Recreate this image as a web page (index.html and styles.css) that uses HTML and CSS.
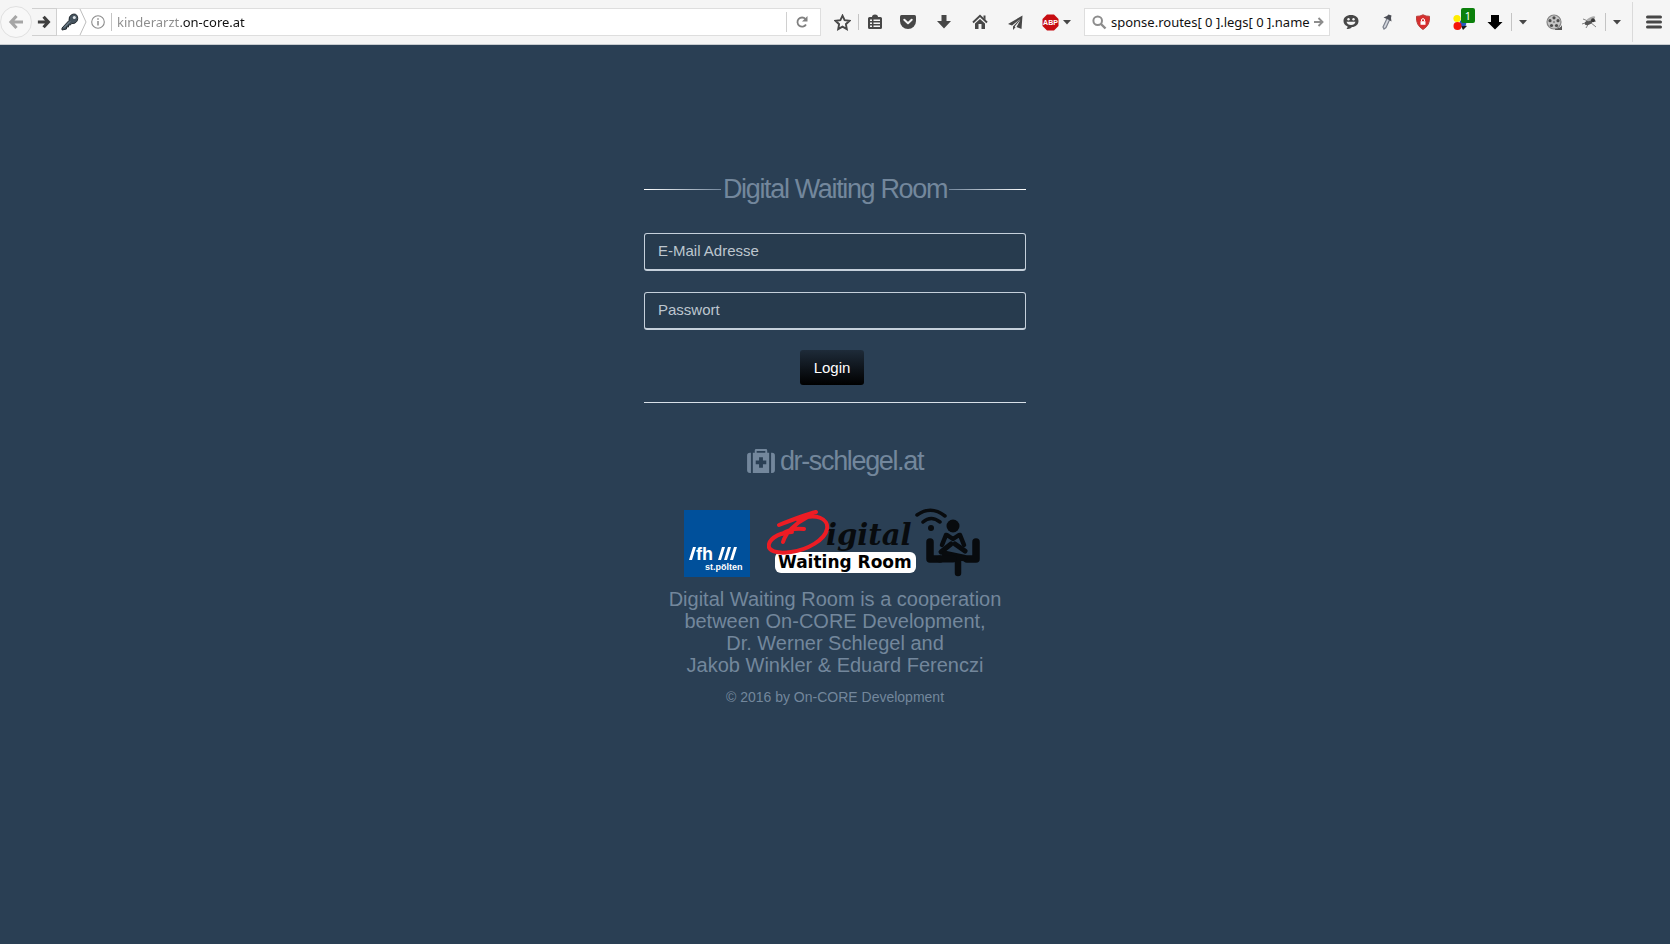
FILE: index.html
```
<!DOCTYPE html>
<html lang="de">
<head>
  <meta charset="UTF-8" />
  <title>Digital Waiting Room</title>
  <link rel="stylesheet" href="styles.css">
</head>
<body>

  <header class="toolbar">
    <div class="history">
      <button type="button" class="back" aria-label="Zurück">
        <svg width="16" height="16" viewBox="0 0 16 16"><path d="M8.500 2 L3 8 L8.500 14 M3.500 8 H15" fill="none" stroke="#a6a6a6" stroke-width="3.200"/></svg>
      </button>
      <button type="button" class="forward" aria-label="Vor">
        <svg width="14" height="14" viewBox="0 0 16 16"><path d="M7.500 2 L13 8 L7.500 14 M12.500 8 H1" fill="none" stroke="#3f3f3f" stroke-width="3.600"/></svg>
      </button>
    </div>

    <div class="urlbar">
      <svg class="key" width="18" height="18" viewBox="0 0 18 18"><path d="M1 15 L8 7.500 Q7.500 3 11 1.500 Q15 0 16.500 3.500 Q17.500 8 14 10 Q12 11 10.500 10.300 L9.500 12 H7.500 V14 H5.500 V16 L1 17 Z" fill="#46545f" stroke="#252c32" stroke-width="1"/><circle cx="13.300" cy="4.500" r="1.500" fill="#dfe4e8"/><path d="M3 14.500 L9 8.500" stroke="#8596a3"/></svg>
      <svg class="chevron" width="8" height="26" viewBox="0 0 8 26"><path d="M1 0 L7 13 L1 26" fill="none" stroke="#bdbdbd"/></svg>
      <svg width="14" height="14" viewBox="0 0 14 14"><circle cx="7" cy="7" r="6.300" fill="none" stroke="#8c8c8c" stroke-width="1.100"/><path d="M7 6 V10.500 M7 3.300 V4.800" stroke="#8c8c8c" stroke-width="1.500"/></svg>
      <span class="divider short"></span>
      <input class="address" type="text" value="kinderarzt.on-core.at" aria-label="Adresse" />
      <button type="button" class="reload" aria-label="Neu laden">
        <svg width="14" height="14" viewBox="0 0 14 14"><path d="M10.500 4 A4.600 4.600 0 1 0 11 9.500" fill="none" stroke="#808080" stroke-width="1.800"/><path d="M12.500 1 V6.500 H7 Z" fill="#808080"/></svg>
      </button>
    </div>

    <button type="button" class="tool star" aria-label="Lesezeichen">
      <svg width="17" height="17" viewBox="0 0 17 17"><path d="M8.500 1.700 L10.600 6.200 L15.500 6.800 L11.900 10.200 L12.800 15.100 L8.500 12.700 L4.200 15.100 L5.100 10.200 L1.500 6.800 L6.400 6.200 Z" fill="none" stroke="#474747" stroke-width="1.900"/></svg>
    </button>
    <span class="divider"></span>
    <button type="button" class="tool list" aria-label="Lesezeichen anzeigen">
      <svg width="16" height="16" viewBox="0 0 16 16"><path d="M5 3 Q5 .5 8 .5 Q11 .5 11 3 H13.500 Q15 3 15 4.500 V13.500 Q15 15 13.500 15 H2.500 Q1 15 1 13.500 V4.500 Q1 3 2.500 3 Z" fill="#474747"/><path d="M3 6.200 H5 M6.500 6.200 H13 M3 9.200 H5 M6.500 9.200 H13 M3 12.200 H5 M6.500 12.200 H13" stroke="#f5f5f5" stroke-width="1.600"/></svg>
    </button>
    <button type="button" class="tool" aria-label="Pocket">
      <svg width="16" height="16" viewBox="0 0 16 16"><path d="M1.500 1 H14.500 Q16 1 16 2.500 V7 A8 8 0 0 1 0 7 V2.500 Q0 1 1.500 1 Z" fill="#474747"/><path d="M4.300 5.700 L8 9.200 L11.700 5.700" fill="none" stroke="#f5f5f5" stroke-width="2" stroke-linecap="round" stroke-linejoin="round"/></svg>
    </button>
    <button type="button" class="tool" aria-label="Downloads">
      <svg width="16" height="16" viewBox="0 0 16 16"><path d="M5.500 1 H10.500 V7 H15 L8 14.500 L1 7 H5.500 Z" fill="#474747"/></svg>
    </button>
    <button type="button" class="tool" aria-label="Startseite">
      <svg width="16" height="16" viewBox="0 0 16 16"><path d="M1 8.500 L8 1.800 L15 8.500" fill="none" stroke="#474747" stroke-width="1.900"/><path d="M11.500 1.500 H13.500 V6 L11.500 4 Z M3 9.500 L8 5 L13 9.500 V15 H9.500 V10 H6.500 V15 H3 Z" fill="#474747"/></svg>
    </button>
    <button type="button" class="tool send" aria-label="Senden">
      <svg width="15" height="15" viewBox="0 0 15 15"><path d="M14.500 .5 L0 9 L4 10.500 L12 4 L5 11.500 V15 L7.500 12.200 L6.700 11.500 L12.500 4.500 L8.500 12 L13.500 14 Z" fill="#474747"/></svg>
    </button>
    <button type="button" class="tool abp" aria-label="Adblock Plus">
      <svg width="17" height="17" viewBox="0 0 17 17"><path d="M5 .5 H12 L16.500 5 V12 L12 16.500 H5 L.5 12 V5 Z" fill="#c70d12"/><text x="8.500" y="11" class="abp-text">ABP</text></svg>
      <svg width="8" height="5" viewBox="0 0 8 5"><path d="M0 0 H8 L4 4.500 Z" fill="#474747"/></svg>
    </button>

    <div class="search">
      <svg width="15" height="15" viewBox="0 0 15 15"><circle cx="5.700" cy="5.700" r="4.300" fill="none" stroke="#8d8d8d" stroke-width="2"/><path d="M9 9 L13.500 13.500" stroke="#8d8d8d" stroke-width="2.400"/></svg>
      <input type="text" value="sponse.routes[ 0 ].legs[ 0 ].name" aria-label="Suchen" />
      <button type="button" aria-label="Suche starten">
        <svg width="10" height="10" viewBox="0 0 10 10"><path d="M0 5 H8 M4.500 1 L8.500 5 L4.500 9" fill="none" stroke="#8d8d8d" stroke-width="1.900"/></svg>
      </button>
    </div>

    <button type="button" class="tool" aria-label="Chat">
      <svg width="16" height="16" viewBox="0 0 16 16"><path d="M8 1 C12.500 1 15.500 3.500 15.500 7 C15.500 10.500 12.500 13 9 13 C7.500 15 5 15 3.500 15 Q4.800 14 4.500 12.300 C2 11.300 .5 9.500 .5 7 C.5 3.500 3.500 1 8 1 Z" fill="#474747"/><circle cx="5.500" cy="5.300" r="1.200" fill="#f5f5f5"/><circle cx="10.500" cy="5.300" r="1.200" fill="#f5f5f5"/><path d="M3.500 7.800 H12.500 Q11.500 11 8 11 Q4.500 11 3.500 7.800 Z" fill="#f5f5f5"/></svg>
    </button>
    <button type="button" class="tool" aria-label="Farbpipette">
      <svg width="16" height="16" viewBox="0 0 16 16"><path d="M8 4.500 L4 13 L5 15 L7 13.500 L10.500 6" fill="#d5d8df" stroke="#7b808c" stroke-width="1.200"/><path d="M4.500 3.500 L8 2 L9.500 .5 L12.500 1.500 L12 4 L12.500 7.500 L9 5.500 Z" fill="#4b4d55"/></svg>
    </button>
    <button type="button" class="tool" aria-label="Schutz">
      <svg width="16" height="16" viewBox="0 0 16 16"><path d="M8 .8 Q11 2.500 14.500 2.300 Q15.500 11 8 15.500 Q.5 11 1.500 2.300 Q5 2.500 8 .8 Z" fill="#d62e2e" stroke="#b9403c"/><path d="M5.500 7.200 H10.500 V10.800 H5.500 Z" fill="#fff"/><path d="M6.500 7 V6 Q6.500 4.700 8 4.700 Q9.500 4.700 9.500 6 V7" fill="none" stroke="#fff" stroke-width="1"/></svg>
    </button>
    <button type="button" class="tool balls" aria-label="Tracker, 1 gefunden">
      <svg width="16" height="16" viewBox="0 0 16 16"><path d="M8 10 L15 12 L11 16 Z" fill="#181818"/><circle cx="11" cy="9" r="3.300" fill="#2858bd"/><circle cx="5" cy="4.500" r="3.600" fill="#ffec00"/><circle cx="5.500" cy="12" r="4" fill="#f41408"/></svg>
      <span class="badge">1</span>
    </button>
    <button type="button" class="tool arrow" aria-label="Herunterladen">
      <svg width="16" height="16" viewBox="0 0 16 16"><path d="M4 1 H12 V8 H15.500 L8 15.500 L.5 8 H4 Z" fill="#000"/></svg>
    </button>
    <span class="divider short"></span>
    <button type="button" class="tool caret" aria-label="Mehr">
      <svg width="8" height="5" viewBox="0 0 8 5"><path d="M0 0 H8 L4 4.500 Z" fill="#474747"/></svg>
    </button>
    <button type="button" class="tool reel" aria-label="Video">
      <svg width="17" height="17" viewBox="0 0 17 17"><path d="M9 14 Q14 15 16 11 V16 H9 Z" fill="#555"/><circle cx="8" cy="8" r="7" fill="#c5c5c5" stroke="#858585" stroke-width="1.200"/><g fill="#4d4d4d"><circle cx="8" cy="3.800" r="1.600"/><circle cx="12" cy="6.700" r="1.600"/><circle cx="10.500" cy="11.500" r="1.600"/><circle cx="5.500" cy="11.500" r="1.600"/><circle cx="4" cy="6.700" r="1.600"/><circle cx="8" cy="8" r=".8"/></g></svg>
    </button>
    <button type="button" class="tool fly" aria-label="Firebug">
      <svg width="16" height="16" viewBox="0 0 16 16"><path d="M2 5 L7 7 M1 10 L7 8 M5 14 L8 9 M15 13 L9 8 M15 7 L9 8" stroke="#666" stroke-width=".8"/><ellipse cx="7.500" cy="8.500" rx="4" ry="2.300" transform="rotate(-25 7.500 8.500)" fill="#555"/><ellipse cx="10" cy="4.700" rx="4.500" ry="1.600" transform="rotate(-25 10 4.700)" fill="#aaa"/><circle cx="12" cy="6.300" r="2" fill="#383838"/></svg>
    </button>
    <span class="divider short"></span>
    <button type="button" class="tool caret" aria-label="Mehr">
      <svg width="8" height="5" viewBox="0 0 8 5"><path d="M0 0 H8 L4 4.500 Z" fill="#474747"/></svg>
    </button>
    <span class="divider tall"></span>
    <button type="button" class="tool menu" aria-label="Menü">
      <svg width="16" height="14" viewBox="0 0 16 14"><path d="M1.500 2 H14.500 M1.500 7 H14.500 M1.500 12 H14.500" stroke="#474747" stroke-width="3" stroke-linecap="round"/></svg>
    </button>
  </header>

  <main class="login">
    <form>
      <h1 class="title">Digital Waiting Room</h1>
      <input type="email" placeholder="E-Mail Adresse" aria-label="E-Mail Adresse" />
      <input type="password" placeholder="Passwort" aria-label="Passwort" />
      <button type="submit">Login</button>
    </form>

    <section class="info">
      <h1>
        <svg width="28" height="24" viewBox="0 0 29 25"><path d="M3 4 H4 V25 H3 Q0 25 0 22 V7 Q0 4 3 4 Z M25 4 H26 Q29 4 29 7 V22 Q29 25 26 25 H25 Z" fill="#73879c"/><path fill-rule="evenodd" d="M6 4 H8 V1.500 Q8 0 9.500 0 H19.500 Q21 0 21 1.500 V4 H23 V25 H6 Z M10 2 V4 H19 V2 Z M12.500 8.500 V12 H9 V16 H12.500 V19.500 H16.500 V16 H20 V12 H16.500 V8.500 Z" fill="#73879c"/></svg>
        dr-schlegel.at
      </h1>

      <div class="logos">
        <svg width="66" height="67" viewBox="0 0 66 67" role="img" aria-label="fh st. pölten">
          <rect width="66" height="67" fill="#00509b"/>
          <path d="M5 50 L9 37 H12 L8 50 Z M34 50 L38 37 H41 L37 50 Z M40 50 L44 37 H47 L43 50 Z M46 50 L50 37 H53 L49 50 Z" fill="#fff"/>
          <text x="12" y="50" class="fh">fh</text>
          <text x="21" y="60" class="fh-city">st.pölten</text>
        </svg>
        <svg width="216" height="70" viewBox="0 0 216 70" role="img" aria-label="Digital Waiting Room">
          <rect x="8" y="44" width="141" height="21" rx="6" fill="#fff"/>
          <text x="11" y="60" class="wr">Waiting Room</text>
          <text x="59" y="37" class="script">igital</text>
          <path d="M49 4 C37 7 22 13 12 17 M31 12 C49 4 62 11 60 21 C58 32 40 42 24 44 C10 46 0 43 2 36 C4 29 15 24 25 24 M39 10 C29 15 19 24 16 34 M15 26 C22 21 30 20 37 21" fill="none" stroke="#ed1c24" stroke-width="4" stroke-linecap="round" stroke-linejoin="round"/>
          <!-- wifi -->
          <path d="M150 7 Q164 -3 178 8 M156 14 Q164 7 173 14" fill="none" stroke="#080b0e" stroke-width="3.500" stroke-linecap="round"/>
          <circle cx="164" cy="20" r="3" fill="#080b0e"/>
          <!-- seated person -->
          <circle cx="186" cy="18" r="6.500" fill="#080b0e"/>
          <g fill="none" stroke="#080b0e" stroke-linecap="round" stroke-linejoin="round">
            <path d="M163 34 V51 H173 M209 34 V51 H200" stroke-width="7.500"/>
            <path d="M179 27 L175 37 M193 27 L197 37 M180 27 L186 31 L192 27" stroke-width="4.500"/>
            <path d="M184 36 L174 44 M188 36 L198 43" stroke-width="5"/>
            <path d="M178 46 L197 50 M191 52 V65" stroke-width="6.500"/>
            <path d="M173 51 H186" stroke-width="7"/>
          </g>
        </svg>
      </div>

      <h2>Digital Waiting Room is a cooperation<br>between On-CORE Development,<br>Dr. Werner Schlegel and<br>Jakob Winkler &amp; Eduard Ferenczi</h2>
      <p>© 2016 by On-CORE Development</p>
    </section>
  </main>

</body>
</html>
```

FILE: styles.css
```
* {
  box-sizing: border-box;
}

body {
  margin: 0;
  min-height: 100vh;
  background-color: #2a3f54;
  color: #73879c;
  font-family: "Liberation Sans", Arial, sans-serif;
}

svg {
  display: block;
  flex: none;
}

button {
  padding: 0;
  border: none;
  background: none;
  cursor: pointer;
}

/* Browser toolbar */
.toolbar {
  display: flex;
  align-items: center;
  height: 45px;
  background-color: #f5f5f5;
  border-bottom: 1px solid #c8ccd0;
}

.history {
  display: flex;
  align-items: center;
}

.back {
  display: flex;
  align-items: center;
  justify-content: center;
  width: 32px;
  height: 32px;
  border: 1px solid #e0e0e0;
  border-radius: 50%;
  background-color: #f8f8f8;
}

.forward {
  display: flex;
  align-items: center;
  justify-content: center;
  width: 25px;
  height: 28px;
  border: 1px solid #d0d0d0;
  border-left: none;
}

.urlbar {
  display: flex;
  align-items: center;
  flex: 1;
  height: 28px;
  padding-left: 4px;
  background-color: #fff;
  border: 1px solid #dedede;
  border-left: none;
}

.chevron {
  margin-right: 4px;
}

.urlbar .divider {
  margin: 0 5px 0 6px;
}

.urlbar input,
.search input {
  flex: 1;
  min-width: 0;
  padding: 0;
  border: none;
  outline: none;
  background: none;
  color: #111;
  font: 13px/20px "Noto Sans", "Open Sans", sans-serif;
}

/* Subdomain in grey, domain in black */
.urlbar .address {
  background: linear-gradient(to right, #8b8b8b 64px, #111 64px);
  -webkit-background-clip: text;
  background-clip: text;
  color: transparent;
}

.reload {
  display: flex;
  align-items: center;
  justify-content: center;
  width: 34px;
  height: 20px;
  padding-right: 3px;
  border-left: 1px solid #d0d0d0;
}

.tool {
  display: flex;
  align-items: center;
  justify-content: center;
  gap: 4px;
  width: 36px;
  height: 32px;
}

.divider {
  width: 1px;
  height: 16px;
  background-color: #c4c4c4;
}

.short {
  height: 18px;
}

.tall {
  height: 40px;
  margin: 0 5px;
  background-color: #dadada;
}

.star {
  width: 32px;
  margin-left: 5px;
}

.list {
  width: 31px;
}

.send {
  width: 34px;
}

.abp {
  width: 48px;
}

.abp-text {
  fill: #fff;
  font: bold 7px "Liberation Sans", sans-serif;
  text-anchor: middle;
}

.search {
  display: flex;
  align-items: center;
  width: 246px;
  height: 28px;
  margin: 0 3px 0 4px;
  padding: 0 5px 0 7px;
  background-color: #fff;
  border: 1px solid #dedede;
}

.search input {
  margin-left: 4px;
}

.balls {
  position: relative;
  width: 38px;
}

.badge {
  position: absolute;
  top: 2px;
  right: 4px;
  width: 14px;
  height: 15px;
  border-radius: 2px;
  background-color: #0b800b;
  color: #fff;
  font: 11px/15px "Noto Sans", sans-serif;
}

.arrow {
  width: 32px;
}

.caret {
  width: 21px;
}

.reel {
  margin-left: 3px;
}

.fly {
  width: 33px;
}

.menu {
  width: 32px;
}

/* Login */
.login {
  max-width: 382px;
  margin: 0 auto;
  padding-top: 128px;
  text-align: center;
}

.login h1 {
  display: flex;
  align-items: center;
  justify-content: center;
  margin: 0;
  font-size: 27px;
  font-weight: normal;
  letter-spacing: -0.05em;
  line-height: 32px;
}

.title {
  gap: 2px;
}

.title::before,
.title::after {
  content: "";
  flex: 1;
  height: 1px;
  background: linear-gradient(to right, #fff, #73879c);
}

.title::after {
  background: linear-gradient(to left, #fff, #73879c);
}

.login form {
  padding-bottom: 17px;
  border-bottom: 1px solid #d8e0e8;
}

.login form input {
  display: block;
  width: 100%;
  height: 38px;
  margin-bottom: 20px;
  padding: 0 13px 2px;
  border: 1px solid #c5d0db;
  border-bottom-width: 2px;
  border-radius: 3px;
  background-color: #273b4e;
  color: #c4cdd6;
  font: 15px "Liberation Sans", Arial, sans-serif;
}

.login form h1 + input {
  margin-top: 28px;
  margin-bottom: 21px;
}

.login form input::placeholder {
  color: #bdc6ce;
  opacity: 1;
}

.login form button {
  height: 35px;
  margin-right: 6px;
  padding: 0 14px;
  border-radius: 3px;
  background: linear-gradient(#1e2b39, #000);
  color: #fff;
  font: 15px "Liberation Sans", Arial, sans-serif;
}

.info h1 {
  gap: 5px;
  margin-top: 42px;
}

.logos {
  display: flex;
  align-items: center;
  justify-content: center;
  gap: 17px;
  margin: 31px 4px 10px 0;
}

.fh {
  fill: #fff;
  font: bold 18px "Liberation Sans", sans-serif;
}

.fh-city {
  fill: #fff;
  font: bold 9px "Liberation Sans", sans-serif;
}

.wr {
  fill: #000;
  font: bold 17px "DejaVu Sans", sans-serif;
}

.script {
  fill: #080b0e;
  font: italic bold 29px "DejaVu Serif", serif;
}

.info h2 {
  margin: 0;
  font-size: 20px;
  font-weight: normal;
  line-height: 22px;
}

.info p {
  margin: 11px 0 0;
  font-size: 14px;
  line-height: 20px;
}
```
